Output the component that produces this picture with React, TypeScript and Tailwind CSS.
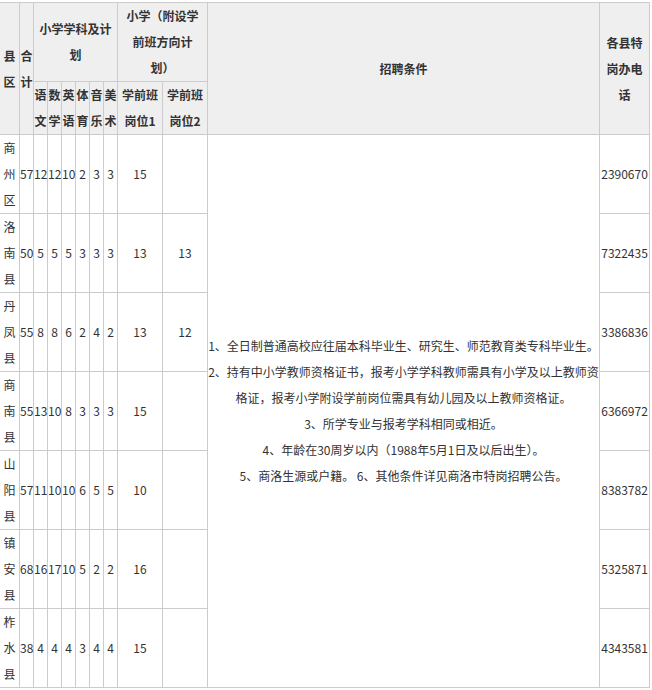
import React from 'react'

const rows = [
  { area: '商州区', total: 57, subj: [12, 12, 10, 2, 3, 3], pre1: '15', pre2: '', tel: '2390670' },
  { area: '洛南县', total: 50, subj: [5, 5, 5, 3, 3, 3], pre1: '13', pre2: '13', tel: '7322435' },
  { area: '丹凤县', total: 55, subj: [8, 8, 6, 2, 4, 2], pre1: '13', pre2: '12', tel: '3386836' },
  { area: '商南县', total: 55, subj: [13, 10, 8, 3, 3, 3], pre1: '15', pre2: '', tel: '6366972' },
  { area: '山阳县', total: 57, subj: [11, 10, 10, 6, 5, 5], pre1: '10', pre2: '', tel: '8383782' },
  { area: '镇安县', total: 68, subj: [16, 17, 10, 5, 2, 2], pre1: '16', pre2: '', tel: '5325871' },
  { area: '柞水县', total: 38, subj: [4, 4, 4, 3, 4, 4], pre1: '15', pre2: '', tel: '4343581' },
]

const conditions = [
  '1、全日制普通高校应往届本科毕业生、研究生、师范教育类专科毕业生。',
  '2、持有中小学教师资格证书，报考小学学科教师需具有小学及以上教师资',
  '格证，报考小学附设学前岗位需具有幼儿园及以上教师资格证。',
  '3、所学专业与报考学科相同或相近。',
  '4、年龄在30周岁以内（1988年5月1日及以后出生）。',
  '5、商洛生源或户籍。 6、其他条件详见商洛市特岗招聘公告。',
]

const cell = 'border border-[#cccccc] p-0 text-center align-middle leading-[26px]'
const head = cell + ' bg-[#efefef] font-bold text-[#333333]'

export default function App() {
  return (
    <div className="w-[652px] h-[690px] overflow-hidden bg-white pt-[2px] font-['Noto_Sans_CJK_SC','Noto_Sans',sans-serif] text-[12px] text-[#333333]">
      <table className="-ml-[1px] w-[650px] table-fixed border-collapse">
        <colgroup>
          <col className="w-[20px]" />
          <col className="w-[14px]" />
          <col className="w-[14px]" />
          <col className="w-[14px]" />
          <col className="w-[14px]" />
          <col className="w-[14px]" />
          <col className="w-[14px]" />
          <col className="w-[14px]" />
          <col className="w-[45px]" />
          <col className="w-[45px]" />
          <col className="w-[392px]" />
          <col className="w-[50px]" />
        </colgroup>
        <thead>
          <tr className="h-[79px]">
            <th rowSpan={2} className={head + ' px-[1px]'}>县区</th>
            <th rowSpan={2} className={head}>合计</th>
            <th colSpan={6} className={head + ' px-[1px]'}>小学学科及计划</th>
            <th colSpan={2} className={head + ' px-[4px]'}>
              小学（附设学<br />前班方向计<br />划）
            </th>
            <th rowSpan={2} className={head}>招聘条件</th>
            <th rowSpan={2} className={head + ' px-[3px]'}>各县特岗办电话</th>
          </tr>
          <tr className="h-[53px]">
            <th className={head}>语文</th>
            <th className={head}>数学</th>
            <th className={head}>英语</th>
            <th className={head}>体育</th>
            <th className={head}>音乐</th>
            <th className={head}>美术</th>
            <th className={head + ' px-[2px]'}>学前班岗位1</th>
            <th className={head + ' px-[2px]'}>学前班岗位2</th>
          </tr>
        </thead>
        <tbody>
          {rows.map((r, i) => (
            <tr key={r.area} className="h-[79px]">
              <td className={cell + ' px-[1px]'}>{r.area}</td>
              <td className={cell}>{r.total}</td>
              {r.subj.map((n, j) => (
                <td key={j} className={cell}>{n}</td>
              ))}
              <td className={cell}>{r.pre1}</td>
              <td className={cell}>{r.pre2}</td>
              {i === 0 && (
                <td rowSpan={rows.length} className={cell}>
                  {conditions.map(line => (
                    <div key={line} className="whitespace-nowrap">{line}</div>
                  ))}
                </td>
              )}
              <td className={cell}>{r.tel}</td>
            </tr>
          ))}
        </tbody>
      </table>
    </div>
  )
}
